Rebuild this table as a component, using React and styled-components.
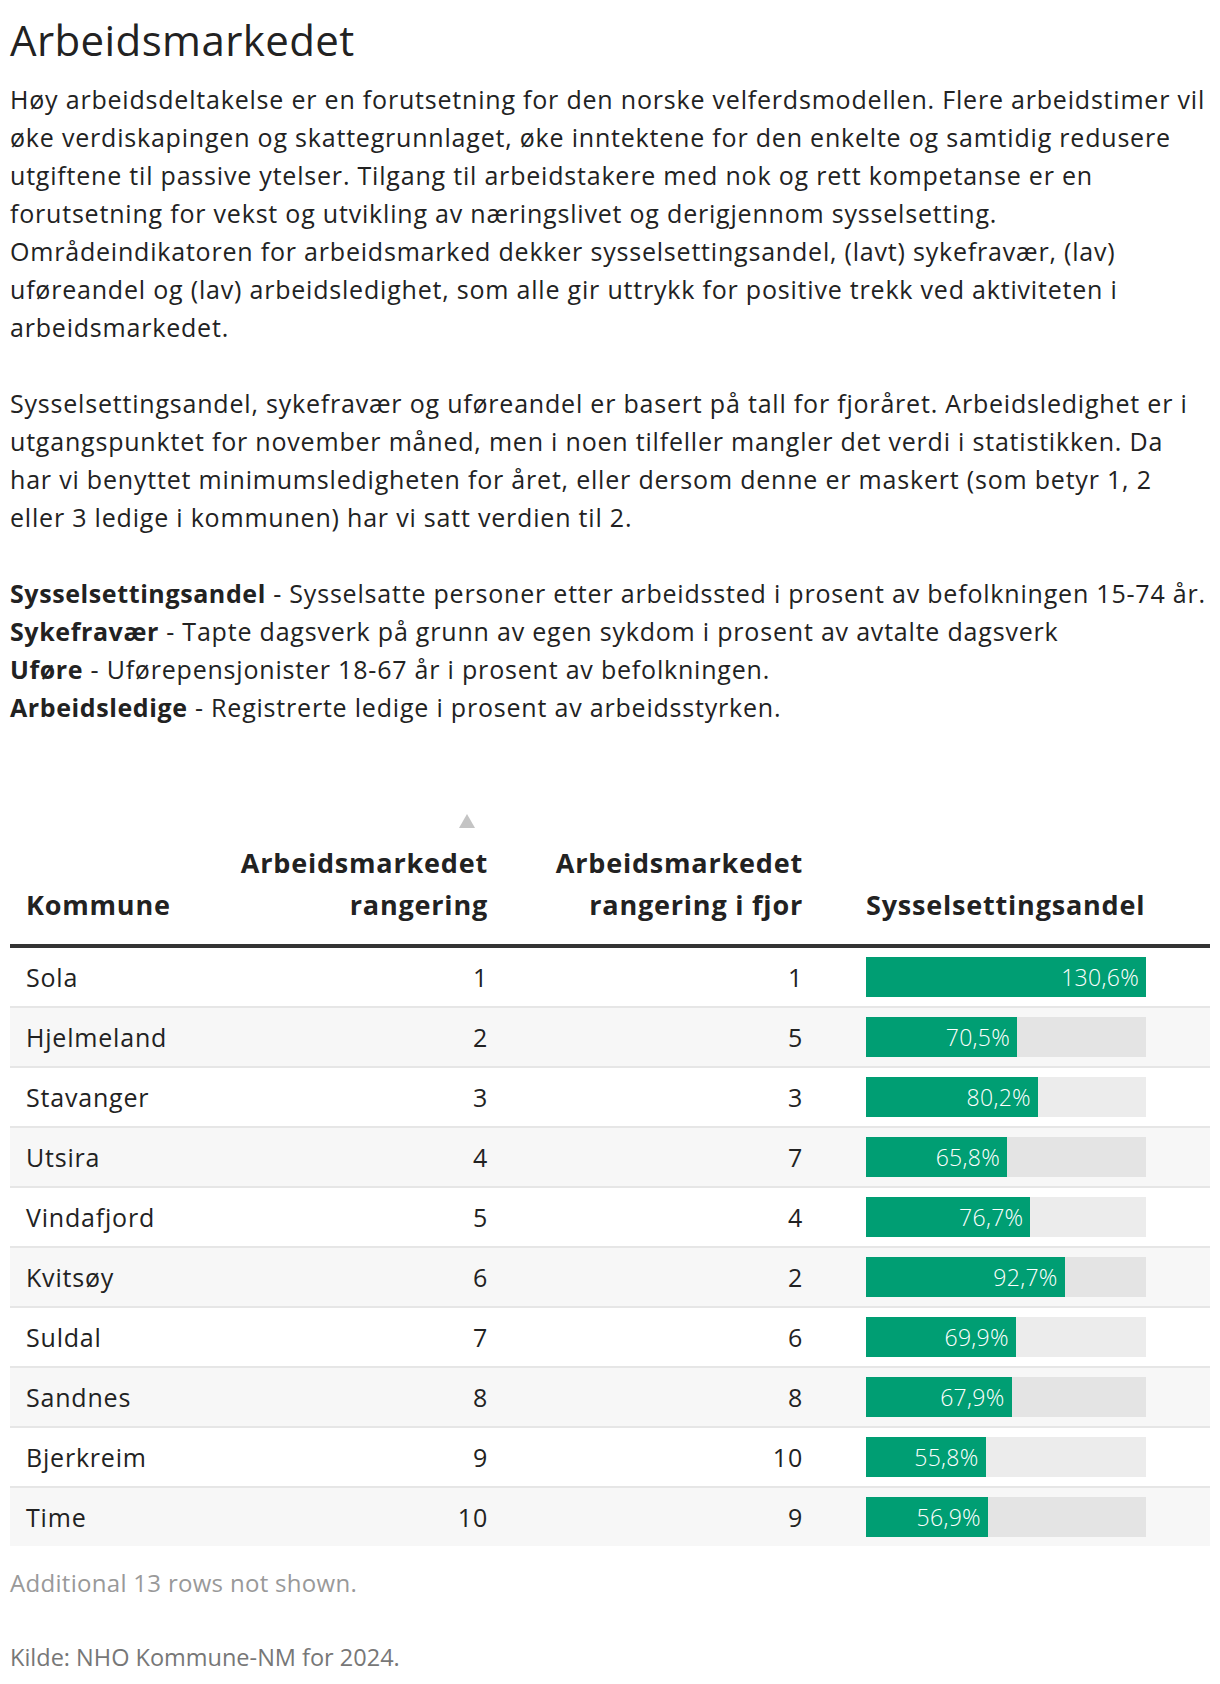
import React from "react";
import styled, { createGlobalStyle } from "styled-components";

const Global = createGlobalStyle`
  html, body { margin: 0; padding: 0; background: #fff; }
  body { font-family: "Open Sans", "Noto Sans", sans-serif; color: #222; }
`;

const Page = styled.div`
  width: 1200px;
  padding: 0 10px;
`;

const Title = styled.h1`
  margin: 16px 0 16px;
  font-size: 42px;
  line-height: 48px;
  font-weight: 400;
  color: #222;
  letter-spacing: 0.4px;
`;

const Text = styled.div`
  font-size: 25px;
  line-height: 38px;
  color: #222;
  letter-spacing: 0.8px;
`;

const Line = styled.div`
  white-space: nowrap;
`;

const Gap = styled.div`
  height: 38px;
`;

const Term = styled.strong`
  font-weight: 700;
  letter-spacing: 0.6px;
`;

const Table = styled.div`
  margin-top: 85px;
  width: 1200px;
`;

const cols = "212px 280px 315px 393px";

const HeadRow = styled.div`
  display: grid;
  grid-template-columns: ${cols};
  align-items: end;
  border-bottom: 4px solid #333;
`;

const HeadCell = styled.div`
  font-size: 27px;
  line-height: 42px;
  font-weight: 700;
  letter-spacing: 0.8px;
  color: #222;
  white-space: nowrap;
  padding: 0 ${(p) => (p.$right ? 14 : 16)}px 18px ${(p) => (p.$pl ? p.$pl : 16)}px;
  text-align: ${(p) => (p.$right ? "right" : "left")};
`;

const SortArrow = styled.div`
  height: 20px;
  margin-bottom: 11px;
  display: flex;
  justify-content: flex-end;
  align-items: center;
  padding-right: 13px;
`;

const Triangle = styled.span`
  width: 0;
  height: 0;
  border-left: 8px solid transparent;
  border-right: 8px solid transparent;
  border-bottom: 14px solid #c4c4c4;
`;

const Row = styled.div`
  display: grid;
  grid-template-columns: ${cols};
  align-items: center;
  height: 58px;
  background: ${(p) => (p.$striped ? "#f7f7f7" : "#fff")};
  border-top: ${(p) => (p.$first ? "none" : "2px solid #e6e6e6")};
`;

const Cell = styled.div`
  font-size: 25px;
  line-height: 38px;
  letter-spacing: 0.8px;
  color: #222;
  padding: 0 ${(p) => (p.$right ? 14 : 16)}px 0 16px;
  text-align: ${(p) => (p.$right ? "right" : "left")};
`;

const BarCell = styled.div`
  padding-left: 49px;
  display: flex;
  align-items: center;
`;

const Track = styled.div`
  width: 280px;
  height: 40px;
  background: rgba(0, 0, 0, 0.075);
  display: flex;
`;

const Fill = styled.div`
  height: 40px;
  background: #009e73;
  color: #fff;
  font-size: 23px;
  font-weight: 300;
  letter-spacing: 0.3px;
  line-height: 40px;
  text-align: right;
  padding-right: 7px;
  box-sizing: border-box;
  white-space: nowrap;
`;

const Note = styled.div`
  margin-top: 18px;
  font-size: 24px;
  line-height: 38px;
  letter-spacing: 0.3px;
  color: ${(p) => p.$color};
`;

const Source = styled(Note)`
  margin-top: 36px;
  font-size: 23.5px;
  letter-spacing: 0;
`;

const rows = [
  ["Sola", 1, 1, 130.6],
  ["Hjelmeland", 2, 5, 70.5],
  ["Stavanger", 3, 3, 80.2],
  ["Utsira", 4, 7, 65.8],
  ["Vindafjord", 5, 4, 76.7],
  ["Kvitsøy", 6, 2, 92.7],
  ["Suldal", 7, 6, 69.9],
  ["Sandnes", 8, 8, 67.9],
  ["Bjerkreim", 9, 10, 55.8],
  ["Time", 10, 9, 56.9],
];

const para1 = [
  "Høy arbeidsdeltakelse er en forutsetning for den norske velferdsmodellen. Flere arbeidstimer vil",
  "øke verdiskapingen og skattegrunnlaget, øke inntektene for den enkelte og samtidig redusere",
  "utgiftene til passive ytelser. Tilgang til arbeidstakere med nok og rett kompetanse er en",
  "forutsetning for vekst og utvikling av næringslivet og derigjennom sysselsetting.",
  "Områdeindikatoren for arbeidsmarked dekker sysselsettingsandel, (lavt) sykefravær, (lav)",
  "uføreandel og (lav) arbeidsledighet, som alle gir uttrykk for positive trekk ved aktiviteten i",
  "arbeidsmarkedet.",
];

const para2 = [
  "Sysselsettingsandel, sykefravær og uføreandel er basert på tall for fjoråret. Arbeidsledighet er i",
  "utgangspunktet for november måned, men i noen tilfeller mangler det verdi i statistikken. Da",
  "har vi benyttet minimumsledigheten for året, eller dersom denne er maskert (som betyr 1, 2",
  "eller 3 ledige i kommunen) har vi satt verdien til 2.",
];

const defs = [
  ["Sysselsettingsandel", "Sysselsatte personer etter arbeidssted i prosent av befolkningen 15-74 år."],
  ["Sykefravær", "Tapte dagsverk på grunn av egen sykdom i prosent av avtalte dagsverk"],
  ["Uføre", "Uførepensjonister 18-67 år i prosent av befolkningen."],
  ["Arbeidsledige", "Registrerte ledige i prosent av arbeidsstyrken."],
];

const max = 130.6;
const fmt = (v) => v.toFixed(1).replace(".", ",") + "%";

export default function App() {
  return (
    <Page>
      <Global />
      <Title>Arbeidsmarkedet</Title>
      <Text>
        {para1.map((l) => (
          <Line key={l}>{l}</Line>
        ))}
      </Text>
      <Gap />
      <Text>
        {para2.map((l) => (
          <Line key={l}>{l}</Line>
        ))}
      </Text>
      <Gap />
      <Text>
        {defs.map(([t, d]) => (
          <Line key={t}>
            <Term>{t}</Term> - {d}
          </Line>
        ))}
      </Text>

      <Table>
        <HeadRow>
          <HeadCell>Kommune</HeadCell>
          <HeadCell $right $pl={4}>
            <SortArrow>
              <Triangle />
            </SortArrow>
            Arbeidsmarkedet
            <br />
            rangering
          </HeadCell>
          <HeadCell $right $pl={4}>
            Arbeidsmarkedet
            <br />
            rangering i fjor
          </HeadCell>
          <HeadCell $pl={49}>Sysselsettingsandel</HeadCell>
        </HeadRow>
        {rows.map(([name, r, prev, pct], i) => (
          <Row key={name} $first={i === 0} $striped={i % 2 === 1}>
            <Cell>{name}</Cell>
            <Cell $right>{r}</Cell>
            <Cell $right>{prev}</Cell>
            <BarCell>
              <Track>
                <Fill style={{ width: `${(pct / max) * 280}px` }}>{fmt(pct)}</Fill>
              </Track>
            </BarCell>
          </Row>
        ))}
      </Table>
      <Note $color="#999">Additional 13 rows not shown.</Note>
      <Source $color="#777">Kilde: NHO Kommune-NM for 2024.</Source>
    </Page>
  );
}
